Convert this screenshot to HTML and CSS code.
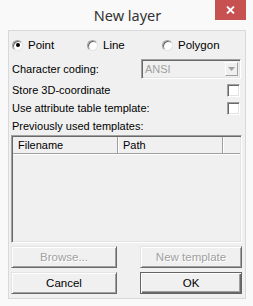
FILE: index.html
```html
<!DOCTYPE html>
<html lang="en">
<head>
    <meta charset="UTF-8">
    <meta name="viewport" content="width=device-width, initial-scale=1.0">
    <title>New layer</title>
    <link rel="stylesheet" href="styles.css">
</head>
<body>

<div class="window">
    <header class="titlebar">
        <span class="title">New layer</span>
        <button class="close-button" aria-label="Close">
            <svg width="9" height="8" viewBox="0 0 9 8">
                <path d="M1 0.5 L8 7.5 M8 0.5 L1 7.5" stroke="#fff" stroke-width="1.8"/>
            </svg>
        </button>
    </header>

    <div class="client">
        <!-- Geometry type -->
        <div class="radio-row">
            <label class="radio"><span class="radio-mark checked"></span>Point</label>
            <label class="radio"><span class="radio-mark"></span>Line</label>
            <label class="radio"><span class="radio-mark"></span>Polygon</label>
        </div>

        <div class="field-row">
            <span>Character coding:</span>
            <div class="combo">
                <span class="combo-text">ANSI</span>
                <span class="combo-button">
                    <svg width="7" height="4" viewBox="0 0 7 4"><path d="M0 0 H7 L3.5 4 Z" fill="#a0a0a0"/></svg>
                </span>
            </div>
        </div>

        <div class="check-row">
            <span>Store 3D-coordinate</span>
            <span class="checkbox"></span>
        </div>
        <div class="check-row">
            <span>Use attribute table template:</span>
            <span class="checkbox"></span>
        </div>

        <div class="label-row">Previously used templates:</div>

        <!-- Template list -->
        <div class="list">
            <div class="list-header">
                <div class="col col-name">Filename</div>
                <div class="col col-path">Path</div>
                <div class="col col-rest"></div>
            </div>
            <div class="list-body"></div>
        </div>

        <div class="button-grid">
            <button class="btn" disabled>Browse...</button>
            <span></span>
            <button class="btn" disabled>New template</button>
            <button class="btn">Cancel</button>
            <span></span>
            <button class="btn btn-default">OK</button>
        </div>
    </div>
</div>

</body>
</html>
```

FILE: styles.css
```css
* {
    margin: 0;
    padding: 0;
    box-sizing: border-box;
}

body {
    font-family: 'Liberation Sans', Arial, sans-serif;
    font-size: 11px;
    color: #000;
    background-color: #f9f9f9;
}

.window {
    width: 253px;
    height: 306px;
    background-color: #f9f9f9;
    display: flex;
    flex-direction: column;
}

.titlebar {
    position: relative;
    height: 30px;
    display: flex;
    justify-content: center;
    align-items: center;
}

.title {
    font-family: 'Noto Sans', sans-serif;
    font-size: 14.5px;
    color: #333;
    margin-left: 2px;
}

.close-button {
    position: absolute;
    top: 0;
    left: 215px;
    width: 31px;
    height: 20px;
    background-color: #c75050;
    border: none;
    display: flex;
    justify-content: center;
    align-items: center;
}

.client {
    margin: 0 7px 0 8px;
    height: 269px;
    background-color: #f0f0f0;
    border: 1px solid #d9d9d9;
    padding: 5px 3px 0 2px;
    display: flex;
    flex-direction: column;
}

.radio-row {
    height: 18px;
    display: grid;
    grid-template-columns: 75px 75px 1fr;
    padding-left: 1px;
    align-items: center;
}

.radio {
    display: flex;
    align-items: center;
    font-size: 11.5px;
}

.radio-mark {
    width: 11px;
    height: 11px;
    margin-right: 5px;
    border-radius: 50%;
    background-color: #fff;
    border: 1px solid;
    border-color: #a0a0a0 #e3e3e3 #e3e3e3 #a0a0a0;
    box-shadow: inset 1px 1px 0 #696969;
    display: flex;
    justify-content: center;
    align-items: center;
}

.radio-mark.checked::after {
    content: "";
    width: 4px;
    height: 4px;
    border-radius: 50%;
    background-color: #000;
}

.field-row {
    margin-top: 5px;
    height: 20px;
    display: grid;
    grid-template-columns: 129px 100px;
    align-items: center;
    padding-left: 1px;
}

.combo {
    height: 20px;
    display: flex;
    align-items: center;
    border: 1px solid;
    border-color: #a0a0a0 #fff #fff #a0a0a0;
    box-shadow: inset 1px 1px 0 #696969, inset -1px -1px 0 #e3e3e3;
    padding: 2px;
}

.combo-text {
    flex: 1;
    color: #a0a0a0;
    padding-left: 1px;
}

.combo-button {
    width: 13px;
    height: 14px;
    border: 1px solid;
    border-color: #fff #a0a0a0 #a0a0a0 #fff;
    display: flex;
    justify-content: center;
    align-items: center;
}

.check-row {
    height: 18px;
    display: flex;
    justify-content: space-between;
    align-items: center;
    padding-left: 1px;
    padding-right: 2px;
    margin-top: 2px;
}

.check-row + .check-row {
    margin-top: 0;
}

.checkbox {
    width: 13px;
    height: 13px;
    background-color: #fff;
    border: 1px solid;
    border-color: #a0a0a0 #fff #fff #a0a0a0;
    box-shadow: inset 1px 1px 0 #696969, inset -1px -1px 0 #e3e3e3;
}

.label-row {
    height: 18px;
    display: flex;
    align-items: center;
    padding-left: 1px;
}

.list {
    height: 108px;
    display: flex;
    flex-direction: column;
    border: 1px solid;
    border-color: #a0a0a0 #fff #fff #a0a0a0;
    box-shadow: inset 1px 1px 0 #696969, inset -1px -1px 0 #e3e3e3;
    padding: 1px 1px 1px 1px;
}

.list-header {
    height: 17px;
    display: flex;
    border-bottom: 1px solid #a0a0a0;
    box-shadow: 0 1px 0 #fff;
}

.col {
    display: flex;
    align-items: center;
    padding-left: 5px;
    border-right: 1px solid #a0a0a0;
    box-shadow: 1px 0 0 #fff;
}

.col-name {
    width: 105px;
}

.col-path {
    width: 105px;
}

.col-rest {
    flex: 1;
    border-right: none;
    box-shadow: none;
}

.list-body {
    flex: 1;
}

.button-grid {
    margin-top: 3px;
    display: grid;
    grid-template-columns: 106px 23px 102px;
    grid-auto-rows: 22px;
    row-gap: 4px;
}

.btn {
    font-family: 'Liberation Sans', Arial, sans-serif;
    font-size: 11.5px;
    color: #000;
    background-color: #f0f0f0;
    border: 1px solid;
    border-color: #e3e3e3 #696969 #696969 #e3e3e3;
    box-shadow: inset 1px 1px 0 #fff, inset -1px -1px 0 #a0a0a0;
}

.btn:disabled {
    color: #a0a0a0;
    text-shadow: 1px 1px 0 #fff;
}

.btn-default {
    border: 1px solid #646464;
    box-shadow: inset 1px 1px 0 #fff, inset -1px -1px 0 #696969, inset -2px -2px 0 #a0a0a0;
}
```
